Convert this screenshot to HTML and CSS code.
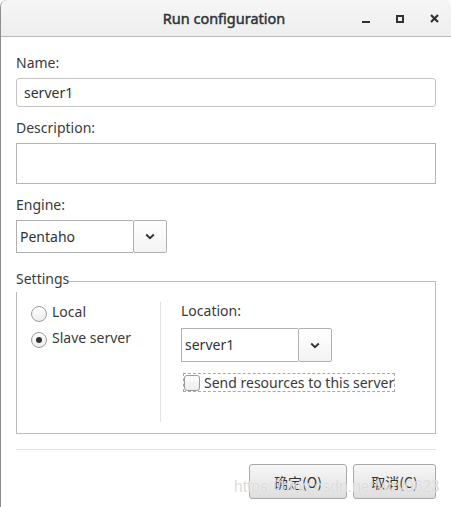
FILE: index.html
```html
<!DOCTYPE html>
<html>
<head>
<meta charset="utf-8">
<link rel="stylesheet" href="styles.css">
</head>
<body>
<div class="window">
  <header class="titlebar">
    <div class="spacer"></div>
    <div class="title">Run configuration</div>
    <div class="controls">
      <span class="ctl"><svg width="8" height="8" viewBox="0 0 8 8"><rect x="0" y="6" width="8" height="2" fill="#2e3436"/></svg></span>
      <span class="ctl"><svg width="8" height="8" viewBox="0 0 8 8"><rect x="1" y="1" width="6" height="6" fill="none" stroke="#2e3436" stroke-width="2"/></svg></span>
      <span class="ctl"><svg width="9" height="9" viewBox="0 0 9 9"><path d="M1 1L8 8M8 1L1 8" stroke="#2e3436" stroke-width="2.2"/></svg></span>
    </div>
  </header>
  <main class="content">
    <div class="label">Name:</div>
    <div class="entry">server1</div>
    <div class="label gap">Description:</div>
    <div class="textarea"></div>
    <div class="label gap">Engine:</div>
    <div class="combo engine">
      <div class="combo-text">Pentaho</div>
      <div class="combo-btn"><svg width="10" height="7" viewBox="0 0 10 7"><path d="M1.2 1.5L5 5.2L8.8 1.5" fill="none" stroke="#2e3436" stroke-width="1.9"/></svg></div>
    </div>
    <fieldset class="settings">
      <legend>Settings</legend>
      <div class="settings-body">
        <div class="radios">
          <div class="radio-row"><span class="radio"></span><span>Local</span></div>
          <div class="radio-row"><span class="radio checked"></span><span>Slave server</span></div>
        </div>
        <div class="vsep"></div>
        <div class="location">
          <div class="label-plain">Location:</div>
          <div class="combo loc">
            <div class="combo-text">server1</div>
            <div class="combo-btn"><svg width="10" height="7" viewBox="0 0 10 7"><path d="M1.2 1.5L5 5.2L8.8 1.5" fill="none" stroke="#2e3436" stroke-width="1.9"/></svg></div>
          </div>
          <div class="check-row"><span class="checkbox"></span><span>Send resources to this server</span></div>
        </div>
      </div>
    </fieldset>
    <div class="hsep"></div>
    <div class="buttons">
      <div class="button ok">确定(O)</div>
      <div class="button cancel">取消(C)</div>
    </div>
  </main>
  <div class="watermark">https://blog.csdn.net/wzy0623</div>
</div>
</body>
</html>
```
FILE: styles.css
```css
html, body {
  margin: 0;
  padding: 0;
  background: #ffffff;
}
.window {
  position: relative;
  width: 451px;
  height: 507px;
  box-sizing: border-box;
  border-left: 1px solid #8e8e8e;
  border-radius: 7px 7px 0 0;
  background: #ffffff;
  overflow: hidden;
  font-family: "Noto Sans", "Noto Sans CJK SC", sans-serif;
  font-size: 14px;
  color: #2e3436;
}
.titlebar {
  height: 36px;
  border-top: 1px solid #c4c4c4;
  border-bottom: 1px solid #b8b8b8;
  box-sizing: content-box;
  margin-top: -1px;
  background: linear-gradient(#f6f6f6, #eeeeee);
  border-radius: 7px 7px 0 0;
  display: grid;
  grid-template-columns: 1fr auto 1fr;
  align-items: center;
}
.title {
  font-weight: normal;
  font-size: 14.5px;
  -webkit-text-stroke: 0.45px #2e3436;
  color: #2e3436;
  padding-right: 4px;
}
.controls {
  display: flex;
  justify-content: flex-end;
  height: 100%;
}
.ctl {
  width: 34px;
  display: flex;
  align-items: center;
  justify-content: center;
  padding-top: 1px;
}
.content {
  padding: 17px 15px 0 15px;
}
.label, .label-plain {
  line-height: 18px;
  color: #3a3a3a;
}
.label.gap {
  margin-top: 12px;
}
.entry {
  margin-top: 6px;
  height: 29px;
  box-sizing: border-box;
  border: 1px solid #c3c3c3;
  border-radius: 3px;
  padding-left: 7px;
  line-height: 27px;
  color: #2e3436;
}
.textarea {
  margin-top: 6px;
  height: 41px;
  box-sizing: border-box;
  border: 1px solid #b4b4b4;
}
.combo {
  display: flex;
  height: 33px;
  box-sizing: border-box;
}
.combo.engine {
  margin-top: 6px;
  width: 151px;
}
.combo-text {
  flex: 1;
  border: 1px solid #b0b0b0;
  border-right: none;
  padding-left: 3px;
  line-height: 31px;
  background: #fff;
}
.combo-btn {
  width: 34px;
  box-sizing: border-box;
  border: 1px solid #b0b0b0;
  border-radius: 2px;
  background: linear-gradient(#ffffff, #f3f3f3);
  display: flex;
  align-items: center;
  justify-content: center;
}
.settings {
  margin: 17px 0 0 0;
  padding: 0 0 11px 0;
  border: 1px solid #bcbcbc;
  min-width: 0;
}
.settings legend {
  padding: 0 0 4px 0;
  margin-left: -1px;
  line-height: 18px;
  color: #3a3a3a;
}
.settings-body {
  display: flex;
  height: 120px;
  margin-top: 10px;
}
.radios {
  width: 143px;
  box-sizing: border-box;
  padding-left: 14px;
  padding-top: 3px;
  display: flex;
  flex-direction: column;
  gap: 8px;
}
.radio-row {
  display: flex;
  align-items: center;
  gap: 5px;
  height: 18px;
  line-height: 18px;
  color: #3a3a3a;
}
.radio-row span:last-child {
  margin-top: -4px;
}
.radio {
  width: 16px;
  height: 16px;
  flex: none;
  box-sizing: border-box;
  border: 1px solid #9c9c9c;
  border-radius: 50%;
  background: linear-gradient(#ffffff, #ececec);
  display: flex;
  align-items: center;
  justify-content: center;
}
.radio.checked::after {
  content: "";
  width: 6px;
  height: 6px;
  border-radius: 50%;
  background: #2e3436;
}
.vsep {
  width: 1px;
  background: #e2e2e2;
}
.location {
  padding-left: 20px;
}
.combo.loc {
  margin-top: 8px;
  width: 151px;
  height: 34px;
}
.combo.loc .combo-text {
  line-height: 32px;
}
.check-row {
  margin-top: 12px;
  margin-left: 3px;
  display: inline-flex;
  align-items: center;
  gap: 4px;
  height: 17px;
  padding-right: 0;
  outline: 1px dashed #a8a8a8;
  line-height: 17px;
  color: #3a3a3a;
}
.checkbox {
  width: 16px;
  height: 16px;
  box-sizing: border-box;
  border: 1px solid #9c9c9c;
  border-radius: 3px;
  background: linear-gradient(#ffffff, #ececec);
}
.hsep {
  margin-top: 15px;
  height: 1px;
  background: #e3e3e3;
}
.buttons {
  margin-top: 14px;
  display: flex;
  justify-content: flex-end;
  gap: 6px;
}
.button {
  height: 35px;
  box-sizing: border-box;
  border: 1px solid #a9a9a9;
  border-radius: 3px;
  background: linear-gradient(#f7f7f7, #dedede);
  display: flex;
  align-items: center;
  justify-content: center;
  font-family: "Noto Sans CJK SC", sans-serif;
  font-size: 14px;
  color: #2e3436;
}
.button.ok {
  width: 98px;
}
.button.cancel {
  width: 83px;
}
.watermark {
  position: absolute;
  left: 233px;
  top: 478px;
  font-family: "Liberation Sans", sans-serif;
  font-size: 15.6px;
  color: rgba(210, 210, 210, 0.8);
  text-shadow: 0 0 1px rgba(255,255,255,0.9);
  pointer-events: none;
}
```
